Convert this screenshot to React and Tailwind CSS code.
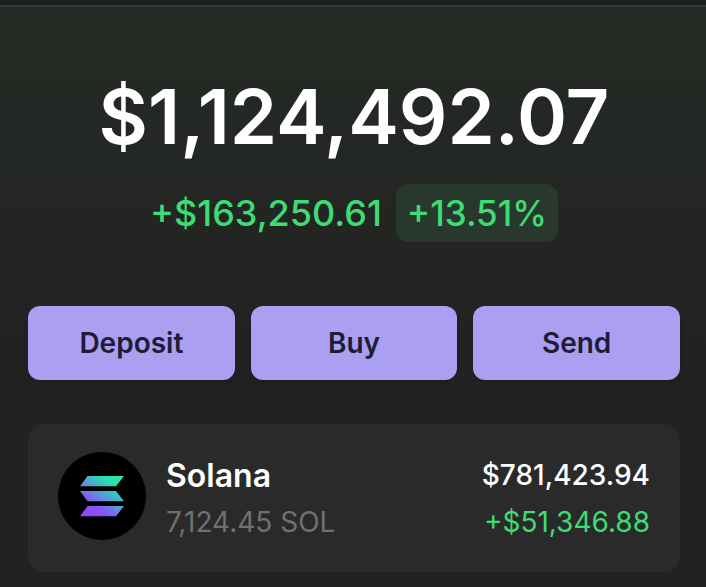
import React from 'react';

const actions = ['Deposit', 'Buy', 'Send'];

const SolanaLogo = () => (
  <svg viewBox="0 0 88 88" className="h-22 w-22 shrink-0" role="img" aria-label="Solana">
    <defs>
      <linearGradient id="solana" x1="25" y1="67" x2="61" y2="19" gradientUnits="userSpaceOnUse">
        <stop offset="0.08" stopColor="#9945ff" />
        <stop offset="0.28" stopColor="#8752f3" />
        <stop offset="0.48" stopColor="#6290dc" />
        <stop offset="0.6" stopColor="#43b4ca" />
        <stop offset="0.75" stopColor="#2bdcb2" />
        <stop offset="0.97" stopColor="#22f0a0" />
      </linearGradient>
    </defs>
    <circle cx="44" cy="44" r="44" fill="#000" />
    <g fill="url(#solana)">
      <path d="M29.500 24h36.500l-8 10.300h-36z" />
      <path d="M22 39h36l8 10.300h-36.500z" />
      <path d="M29.500 54h36.500l-8 10.300h-36z" />
    </g>
  </svg>
);

const App = () => {
  return (
    <div className="min-h-screen border-t-5 border-[#1f2020] bg-[#222222] font-['Inter',sans-serif]">
      <main className="border-t-2 border-[#343835] bg-linear-to-b from-[#252b25] to-[#222222] to-60% pt-16 pr-[26px] pb-3 pl-7">
        {/* Balance */}
        <section className="flex flex-col items-center">
          <h1 className="text-[76px] leading-[90px] font-semibold text-white">$1,124,492.07</h1>
          <div className="mt-[23px] flex items-center gap-[14px] text-4xl leading-[58px] font-medium text-[#3ddc74]">
            <span>+$163,250.61</span>
            <span className="rounded-xl bg-[#28382c] px-[11px] text-[35px]">+13.51%</span>
          </div>
        </section>

        {/* Actions */}
        <div className="mt-16 grid grid-cols-3 gap-4">
          {actions.map((action) => (
            <button key={action} type="button" className="h-[74px] rounded-xl bg-[#aa9ff0] text-[28px] font-semibold text-[#201c35] shadow-md">
              {action}
            </button>
          ))}
        </div>

        {/* Holdings */}
        <section className="mt-11 flex items-start gap-5 rounded-2xl bg-[#2a2a2a] px-[30px] pt-7 pb-[26px]">
          <SolanaLogo />
          <div className="flex-1">
            <h2 className="text-[32px] leading-[47px] font-semibold text-white">Solana</h2>
            <p className="text-[28px] leading-[47px] text-[#707070]">7,124.45 SOL</p>
          </div>
          <div className="text-right text-[28px] leading-[47px]">
            <p className="font-medium text-white">$781,423.94</p>
            <p className="text-[#3ddc74]">+$51,346.88</p>
          </div>
        </section>
      </main>
    </div>
  );
};

export default App;
